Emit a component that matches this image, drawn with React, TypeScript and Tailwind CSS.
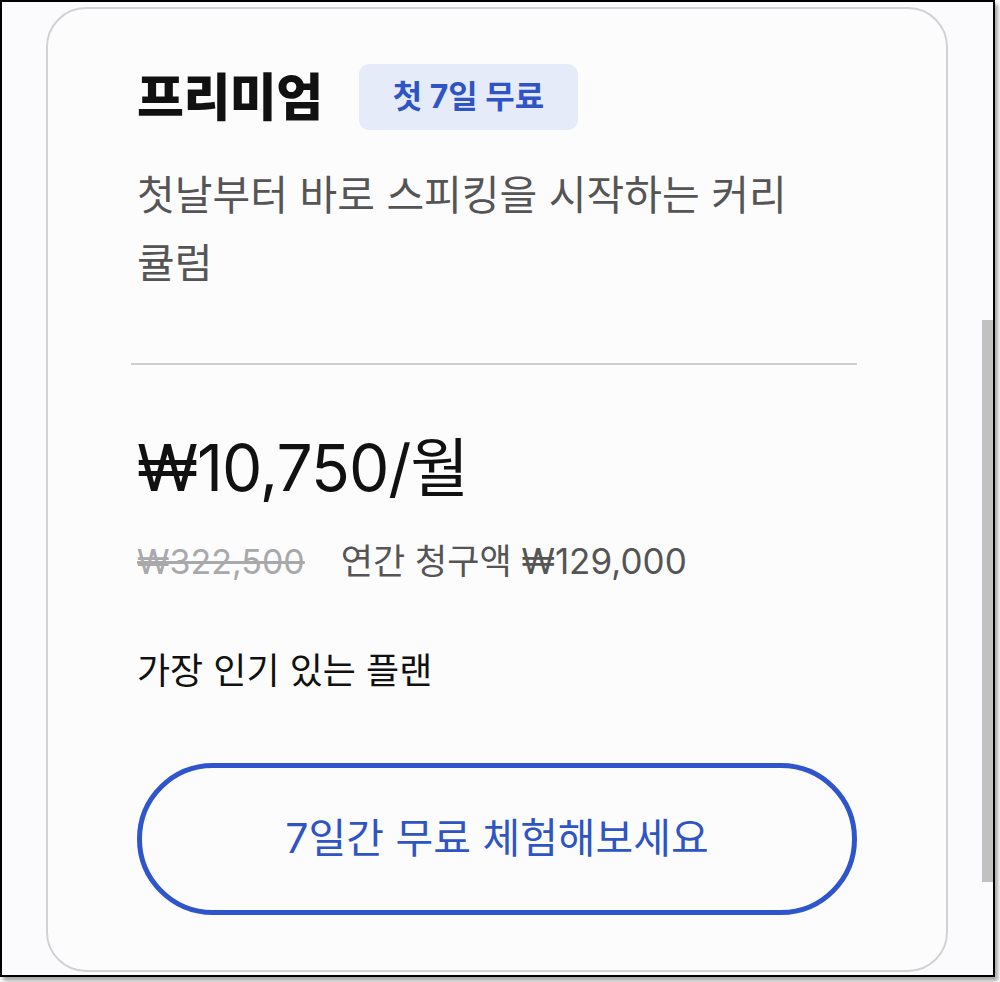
export default function App() {
  const font = { fontFamily: 'Inter, "Noto Sans CJK KR", sans-serif' };
  return (
    <div className="w-[1000px] h-[982px] bg-white" style={font}>
      <div className="relative w-[995px] h-[977px] border-2 border-black bg-[#fbfbfd] shadow-[3px_4px_4px_rgba(0,0,0,0.35)] overflow-hidden">
        {/* 카드 */}
        <div className="ml-[44px] mt-[5px] w-[902px] h-[965px] rounded-[40px] border-2 border-[#d2d2d4] bg-[#fcfcfd] px-[89px] pt-[55px]">
          <div className="flex items-center gap-[36px]">
            <h1 className="text-[51px] font-black leading-none text-[#111] tracking-[-0.5px]">프리미엄</h1>
            <span className="h-[66px] px-[34px] flex items-center rounded-[10px] bg-[#e5ebf9] text-[32px] font-bold text-[#2f55c4]">
              첫 7일 무료
            </span>
          </div>
          <p className="mt-[31px] w-[680px] text-[41px] leading-[68px] text-[#555]">
            첫날부터 바로 스피킹을 시작하는 커리큘럼
          </p>
          <div className="mt-[66px] -ml-[6px] h-[2px] bg-[#cfcfd1]" />
          <div className="mt-[71px] text-[64px] leading-none text-[#111] tracking-[-1px]">₩10,750/월</div>
          <div className="mt-[44px] flex items-center gap-[36px] text-[35px] leading-none">
            <span className="line-through text-[#a9a9ab] text-[34px]">₩322,500</span>
            <span className="text-[#555]">연간 청구액 ₩129,000</span>
          </div>
          <div className="mt-[74px] text-[36px] leading-none text-[#111]">가장 인기 있는 플랜</div>
          <button className="mt-[74px] w-full h-[152px] rounded-full border-[5px] border-[#2f55cc] text-[41px] text-[#2f55c4]">
            7일간 무료 체험해보세요
          </button>
        </div>
        {/* 스크롤바 */}
        <div className="absolute right-[0px] top-[318px] w-[11px] h-[562px] bg-[#c1c1c1]" />
      </div>
    </div>
  );
}
